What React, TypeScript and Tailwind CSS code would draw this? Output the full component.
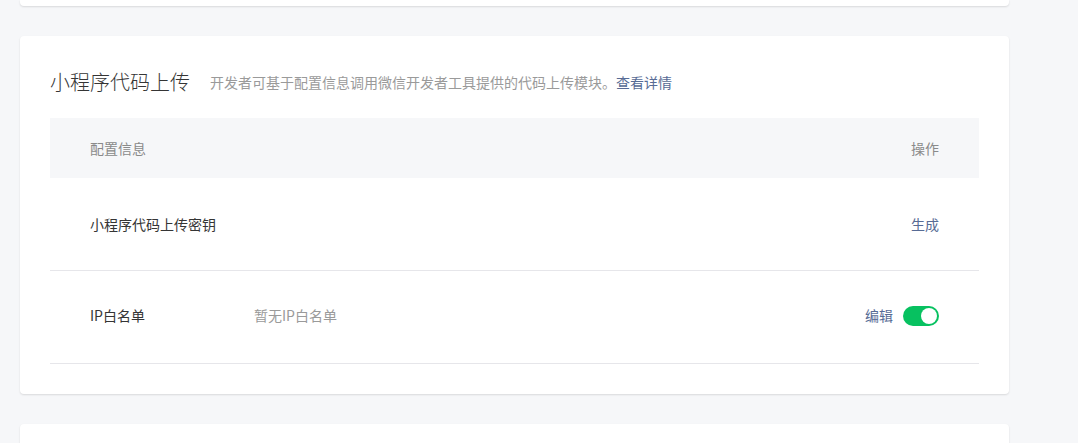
import React from "react";

export default function App() {
  const font = { fontFamily: '"Noto Sans CJK SC", "Noto Sans", sans-serif' };
  return (
    <div className="min-h-[443px] w-[1078px] overflow-hidden bg-[#f6f7f9] pl-5" style={font}>
      <div className="h-[6px] w-[989px] rounded-b bg-white shadow-[0_1px_2px_rgba(0,0,0,0.12)]" />
      <div className="mt-[30px] w-[989px] rounded bg-white px-[30px] pb-[30px] pt-[30px] shadow-[0_1px_2px_rgba(0,0,0,0.12)]">
        <div className="flex h-8 items-center">
          <h2 className="text-[20px] font-light leading-8 text-[#353535]">小程序代码上传</h2>
          <p className="ml-5 text-[14px] leading-8 text-[#9a9a9a]">
            开发者可基于配置信息调用微信开发者工具提供的代码上传模块。
            <a className="text-[#576b95]">查看详情</a>
          </p>
        </div>
        <div className="mt-5">
          <div className="flex h-[60px] items-center justify-between bg-[#f6f7f9] px-10 text-[14px] text-[#8a8a8a]">
            <span>配置信息</span>
            <span>操作</span>
          </div>
          <div className="flex h-[93px] items-center justify-between border-b border-[#e6e6ea] px-10 text-[14px]">
            <span className="text-[#353535]">小程序代码上传密钥</span>
            <a className="text-[#576b95]">生成</a>
          </div>
          <div className="flex h-[93px] items-center border-b border-[#e6e6ea] px-10 pb-[3px] text-[14px]">
            <span className="w-[164px] text-[#353535]">IP白名单</span>
            <span className="flex-1 text-[#9a9a9a]">暂无IP白名单</span>
            <a className="text-[#576b95]">编辑</a>
            <div className="ml-[10px] flex h-5 w-9 items-center justify-end rounded-full bg-[#07c160] px-[2px]">
              <div className="h-4 w-4 rounded-full bg-white" />
            </div>
          </div>
        </div>
      </div>
      <div className="mt-[30px] h-[40px] w-[989px] rounded-t bg-white shadow-[0_1px_2px_rgba(0,0,0,0.12)]" />
    </div>
  );
}
